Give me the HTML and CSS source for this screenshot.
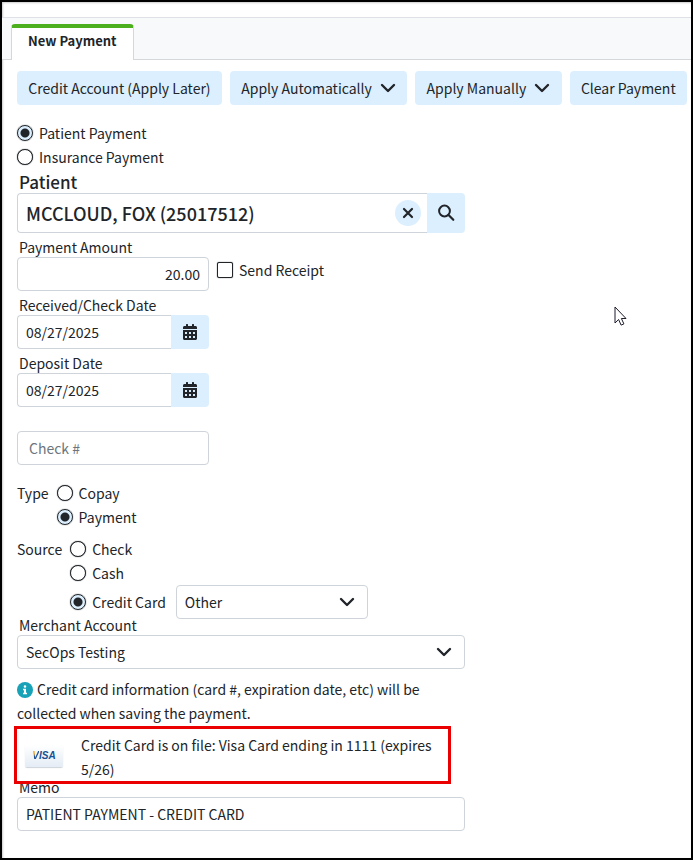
FILE: index.html
```html
<!DOCTYPE html>
<html lang="en">
<head>
<meta charset="utf-8">
<title>New Payment</title>
<link rel="stylesheet" href="styles.css">
</head>
<body>
<svg class="defs" aria-hidden="true">
  <symbol id="chevron" viewBox="0 0 16 16"><path d="M2 5l6 6 6-6" fill="none" stroke="#212529" stroke-width="2.4" stroke-linecap="round" stroke-linejoin="round"/></symbol>
  <symbol id="calendar" viewBox="0 0 448 512"><path fill="#212529" d="M0 464c0 26.500 21.500 48 48 48h352c26.500 0 48-21.500 48-48V192H0v272zm320-196c0-6.600 5.400-12 12-12h40c6.600 0 12 5.400 12 12v40c0 6.600-5.400 12-12 12h-40c-6.600 0-12-5.400-12-12v-40zm0 128c0-6.600 5.400-12 12-12h40c6.600 0 12 5.400 12 12v40c0 6.600-5.400 12-12 12h-40c-6.600 0-12-5.400-12-12v-40zM192 268c0-6.600 5.400-12 12-12h40c6.600 0 12 5.400 12 12v40c0 6.600-5.400 12-12 12h-40c-6.600 0-12-5.400-12-12v-40zm0 128c0-6.600 5.400-12 12-12h40c6.600 0 12 5.400 12 12v40c0 6.600-5.400 12-12 12h-40c-6.600 0-12-5.400-12-12v-40zM64 268c0-6.600 5.400-12 12-12h40c6.600 0 12 5.400 12 12v40c0 6.600-5.400 12-12 12H76c-6.600 0-12-5.400-12-12v-40zm0 128c0-6.600 5.400-12 12-12h40c6.600 0 12 5.400 12 12v40c0 6.600-5.400 12-12 12H76c-6.600 0-12-5.400-12-12v-40zM400 64h-48V16c0-8.800-7.200-16-16-16h-32c-8.800 0-16 7.200-16 16v48H160V16c0-8.800-7.200-16-16-16h-32c-8.800 0-16 7.200-16 16v48H48C21.500 64 0 85.500 0 112v48h448v-48c0-26.500-21.500-48-48-48z"/></symbol>
</svg>
<main class="window">
  <nav class="tabs"><a class="tab" href="#payment">New Payment</a></nav>
  <div class="toolbar">
    <button class="btn" type="button">Credit Account (Apply Later)</button>
    <button class="btn" type="button">Apply Automatically <svg class="chev"><use href="#chevron"/></svg></button>
    <button class="btn" type="button">Apply Manually <svg class="chev"><use href="#chevron"/></svg></button>
    <button class="btn" type="button">Clear Payment</button>
  </div>
  <form class="form" id="payment">
    <div class="choices">
      <label class="choice"><input type="radio" name="payer" checked>Patient Payment</label>
      <label class="choice"><input type="radio" name="payer">Insurance Payment</label>
    </div>

    <label class="label label-large" for="patient">Patient</label>
    <div class="group group-large">
      <input class="control" id="patient" type="text" value="MCCLOUD, FOX (25017512)">
      <button class="clear" type="button" aria-label="Clear patient"><svg width="12" height="12" viewBox="0 0 12 12"><path d="M2 2l8 8M10 2l-8 8" stroke="#212529" stroke-width="2.2" stroke-linecap="round"/></svg></button>
      <button class="addon" type="button" aria-label="Search"><svg width="18" height="18" viewBox="0 0 18 18"><circle cx="7.500" cy="7" r="5.400" fill="none" stroke="#212529" stroke-width="2"/><path d="M11.500 11l4.800 4.800" stroke="#212529" stroke-width="2.200" stroke-linecap="round"/></svg></button>
    </div>

    <div class="amount-row">
      <div class="field">
        <label class="label" for="amount">Payment Amount</label>
        <div class="group"><input class="control number" id="amount" type="text" value="20.00"></div>
      </div>
      <label class="choice"><input type="checkbox">Send Receipt</label>
    </div>

    <div class="field">
      <label class="label" for="received">Received/Check Date</label>
      <div class="group">
        <input class="control" id="received" type="text" value="08/27/2025">
        <button class="addon" type="button" aria-label="Pick received date"><svg width="14" height="16"><use href="#calendar"/></svg></button>
      </div>
    </div>
    <div class="field">
      <label class="label" for="deposit">Deposit Date</label>
      <div class="group">
        <input class="control" id="deposit" type="text" value="08/27/2025">
        <button class="addon" type="button" aria-label="Pick deposit date"><svg width="14" height="16"><use href="#calendar"/></svg></button>
      </div>
    </div>
    <div class="field check">
      <div class="group"><input class="control" type="text" placeholder="Check #" aria-label="Check number"></div>
    </div>

    <div class="options" role="group" aria-label="Type">
      <span>Type</span>
      <div>
        <label class="choice"><input type="radio" name="type">Copay</label>
        <label class="choice"><input type="radio" name="type" checked>Payment</label>
      </div>
    </div>
    <div class="options" role="group" aria-label="Source">
      <span>Source</span>
      <div>
        <label class="choice"><input type="radio" name="source">Check</label>
        <label class="choice"><input type="radio" name="source">Cash</label>
        <div class="card-row">
          <label class="choice"><input type="radio" name="source" checked>Credit Card</label>
          <div class="select card-type"><select aria-label="Card type"><option>Other</option></select><svg class="chev"><use href="#chevron"/></svg></div>
        </div>
      </div>
    </div>

    <label class="label merchant" for="merchant">Merchant Account</label>
    <div class="select"><select id="merchant"><option>SecOps Testing</option></select><svg class="chev"><use href="#chevron"/></svg></div>

    <p class="note"><svg class="info" viewBox="0 0 16 16"><circle cx="8" cy="8" r="8" fill="#17a2b8"/><path d="M8 3.200a1.300 1.300 0 1 0 0 2.600a1.300 1.300 0 0 0 0-2.600zM6 6.700h3v4h1v1.600H6v-1.600h1V8.200H6z" fill="#fff"/></svg>Credit card information (card #, expiration date, etc) will be collected when saving the payment.</p>

    <div class="on-file">
      <span class="visa"><b>V</b>ISA</span>
      <span class="on-file-text">Credit Card is on file: Visa Card ending in 1111 (expires 5/26)</span>
    </div>

    <label class="label memo" for="memo">Memo</label>
    <div class="group"><input class="control" id="memo" type="text" value="PATIENT PAYMENT - CREDIT CARD"></div>
  </form>
  <svg class="pointer" width="14" height="21" viewBox="0 0 14 21" aria-hidden="true"><path d="M1 1v16l3.600-3.500 2.500 5.600 2.800-1.200-2.500-5.400H12z" fill="#fff" stroke="#1b1b2b" stroke-width="1"/></svg>
</main>
</body>
</html>
```

FILE: styles.css
```css
* { box-sizing: border-box; }

body {
  margin: 0;
  color: #212529;
  font: 14px/24px "Noto Sans CJK SC", "Noto Sans", sans-serif;
}

button, input, select { font: inherit; color: inherit; margin: 0; }
svg { display: block; flex: none; }
.defs { position: absolute; width: 0; height: 0; }

.window {
  position: relative;
  min-height: 100vh;
  padding-top: 15px;
  border: 2px solid #000;
  box-shadow: inset 1px 1px 2px #ccc;
}

.tabs {
  display: flex;
  align-items: flex-end;
  height: 43px;
  padding-left: 9px;
  background: #f8f9fb;
  border-top: 1px solid #dee2e6;
  border-bottom: 1px solid #d5d8db;
}
.tab {
  height: 36px;
  margin-bottom: -1px;
  padding: 1px 16px 0;
  background: #fff;
  border: 1px solid #d5d8db;
  border-top: 4px solid #4caf1e;
  border-bottom: 0;
  border-radius: 4px 4px 0 0;
  color: inherit;
  font-size: 13px;
  font-weight: 700;
  text-decoration: none;
}

.toolbar { display: flex; gap: 8px; padding: 11px 4px 0 15px; }
.btn {
  display: flex;
  flex: 1 1 auto;
  align-items: center;
  justify-content: center;
  gap: 8px;
  height: 34px;
  padding: 0 8px;
  border: 0;
  border-radius: 4px;
  background: #dceffe;
  white-space: nowrap;
}
.chev { width: 16px; height: 16px; }

.form { max-width: 463px; padding: 16px 0 24px 15px; }

.choice { display: flex; align-items: center; gap: 6px; white-space: nowrap; }
.choice input {
  appearance: none;
  flex: none;
  width: 16px;
  height: 16px;
  border: 1px solid #212529;
  background: #fff;
}
.choice input[type="radio"] { border-radius: 50%; box-shadow: 0 0 1px #212529; }
.choice input[type="checkbox"] { border-radius: 2px; box-shadow: 0 0 1px #212529; }
.choice input:checked { background: radial-gradient(circle, #212529 0 4px, #dceffe 5px); }

.label { display: block; padding: 0 0 2px 2px; line-height: 16px; }
.label-large { padding: 1px 0 0 2px; font-size: 17px; font-weight: 500; line-height: 23px; }

.group { display: flex; height: 34px; }
.control {
  flex: 1;
  min-width: 0;
  padding: 0 8px;
  border: 1px solid #ced4da;
  border-radius: 4px;
  background: #fff;
}
.control:not(:last-child) { border-right: 0; border-radius: 4px 0 0 4px; }
.control::placeholder { color: #6c757d; opacity: 1; }
.number { text-align: right; }
.addon {
  display: grid;
  place-items: center;
  width: 38px;
  padding: 0;
  border: 0;
  border-radius: 0 4px 4px 0;
  background: #dceffe;
}
.group-large { height: 40px; margin-bottom: 6px; }
.group-large .control { font-size: 18px; font-weight: 500; }
.group-large .clear {
  display: grid;
  place-items: center;
  align-self: center;
  width: 26px;
  height: 26px;
  margin: 0 6px 0 -32px;
  padding: 0;
  border: 0;
  border-radius: 50%;
  background: #dceffe;
  z-index: 1;
}

.field { width: 192px; margin-bottom: 6px; }
.amount-row { display: flex; gap: 8px; }
.amount-row .choice { align-self: center; margin-top: 4px; }
.check { margin: 24px 0 16px; }
.check .control { padding-left: 11px; }

.options { display: flex; gap: 8px; margin-bottom: 8px; }
.card-row { display: flex; align-items: center; gap: 10px; }

.select { display: grid; align-items: center; }
.select select, .select .chev { grid-area: 1 / 1; }
.select select {
  appearance: none;
  height: 34px;
  padding: 0 40px 0 8px;
  border: 1px solid #ced4da;
  border-radius: 4px;
  background: #fff;
}
.select .chev { justify-self: end; margin-right: 13px; pointer-events: none; }
.card-type { width: 192px; }
.merchant { margin-top: -10px; }

.note { max-width: 430px; margin: 8px 0 1px; }
.info { display: inline-block; width: 16px; height: 16px; margin-right: 4px; vertical-align: -3px; }

.on-file {
  position: relative;
  z-index: 1;
  display: flex;
  gap: 18px;
  margin: 0 14px 0 -3px;
  padding: 4px 8px 0;
  height: 58px;
  border: 3px solid #ea0000;
}
.visa {
  align-self: flex-start;
  margin-top: 12px;
  width: 38px;
  border-radius: 2px;
  background: linear-gradient(#fff, #e4ecf5);
  box-shadow: 0 1px 1px #ccd3da;
  color: #164f94;
  font: italic 700 10px/22px "Liberation Sans", sans-serif;
  text-align: center;
}
.visa b {
  background: linear-gradient(110deg, #f0a628 35%, #164f94 45%);
  background-clip: text;
  color: transparent;
}
.on-file-text { flex: 1; }
.memo { margin-top: -5px; }

.pointer { position: absolute; left: 612px; top: 304px; }
```
